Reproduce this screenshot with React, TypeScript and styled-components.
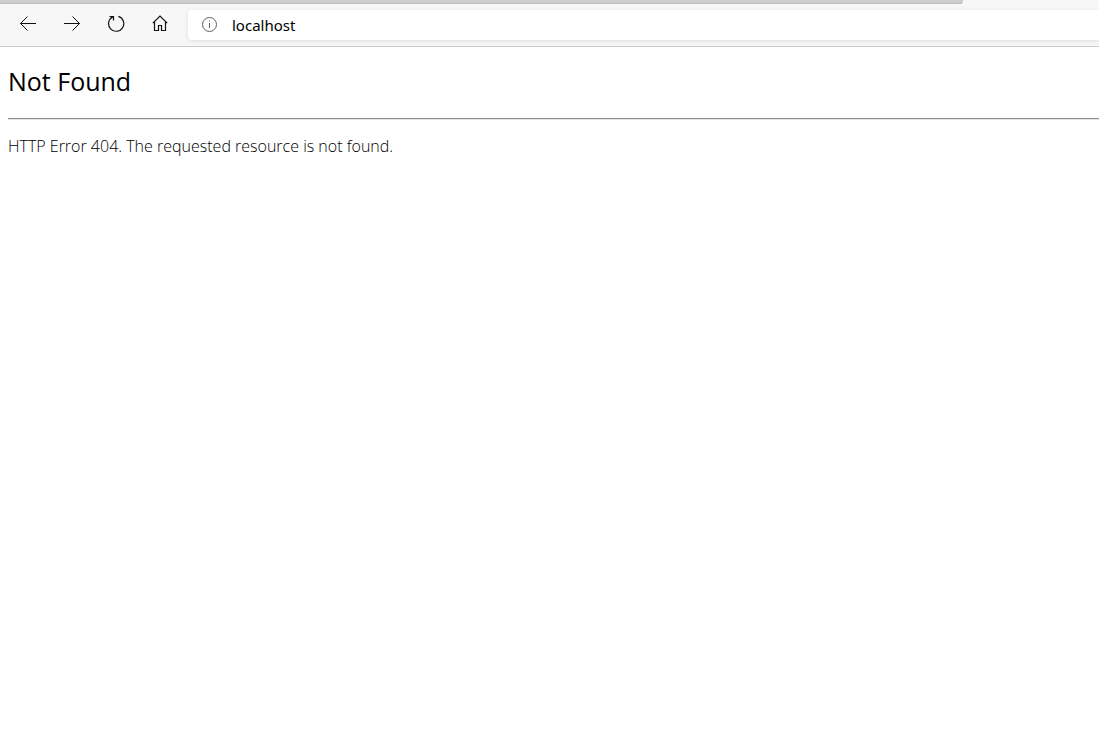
import React from "react";
import styled, { createGlobalStyle } from "styled-components";

const GlobalStyle = createGlobalStyle`
  * { box-sizing: border-box; }
  body {
    margin: 0;
    background: #fff;
    color: #000;
    font-family: "Open Sans", "Noto Sans", sans-serif;
  }
`;

const Chrome = styled.header`
  background: #f7f7f7;
  border-bottom: 1px solid #cccccc;
`;

const TabStrip = styled.div`
  height: 4px;
  padding-right: 136px;
`;

const TabStripFill = styled.div`
  height: 4px;
  background: #cdcdcd;
  border-bottom: 1px solid #bcbcbc;
  border-bottom-right-radius: 3px;
`;

const Toolbar = styled.nav`
  display: flex;
  align-items: center;
  height: 42px;
  padding: 0 0 0 6px;
`;

const ToolButton = styled.button`
  display: flex;
  align-items: center;
  justify-content: center;
  flex: none;
  width: 44px;
  height: 40px;
  margin-bottom: 2px;
  padding: 0;
  border: 0;
  background: transparent;
`;

const AddressBar = styled.label`
  display: flex;
  align-items: center;
  flex: 1;
  min-width: 0;
  height: 30px;
  margin-left: 6px;
  padding-left: 13px;
  gap: 14px;
  background: #fff;
  border-radius: 4px 0 0 4px;
  box-shadow: 0 1px 4px rgba(0, 0, 0, 0.1);
`;

const AddressInput = styled.input`
  flex: 1;
  min-width: 0;
  height: 28px;
  padding: 0;
  border: 0;
  outline: 0;
  background: transparent;
  color: #000;
  font: 400 15px "Noto Sans", "Open Sans", sans-serif;
`;

const Icon = styled.svg`
  display: block;
  flex: none;
  fill: none;
  stroke: #111;
`;

const Page = styled.main`
  padding-left: 8px;
`;

const Title = styled.h1`
  margin: 0;
  padding: 17px 0 20px;
  font-size: 25px;
  line-height: 34px;
  font-weight: 400;
`;

const Rule = styled.hr`
  height: 2px;
  margin: 0;
  border: 0;
  border-top: 1px solid #8f8f8f;
  border-bottom: 1px solid #e4e4e4;
`;

const Message = styled.p`
  margin: 0;
  padding-top: 14px;
  font-size: 16px;
  line-height: 24px;
  font-weight: 300;
`;

export default function App() {
  return (
    <>
      <GlobalStyle />
      <Chrome>
        <TabStrip>
          <TabStripFill />
        </TabStrip>
        <Toolbar aria-label="Browser">
          <ToolButton type="button" aria-label="Back">
            <Icon width="18" height="18" viewBox="0 0 18 18">
              <path d="M1.5 8.5H17M8.5 1.5L1.5 8.5L8.5 15.5" />
            </Icon>
          </ToolButton>
          <ToolButton type="button" aria-label="Forward">
            <Icon width="18" height="18" viewBox="0 0 18 18">
              <path d="M1 8.5H16.5M9.5 1.5L16.5 8.5L9.5 15.5" />
            </Icon>
          </ToolButton>
          <ToolButton type="button" aria-label="Refresh">
            <Icon width="18" height="18" viewBox="0 0 18 18">
              <path d="M11.4 1.4A7.6 7.6 0 1 1 5.7 1.9M2.5 1.5H6.5V5.5" strokeWidth="1.2" />
            </Icon>
          </ToolButton>
          <ToolButton type="button" aria-label="Home">
            <Icon width="18" height="18" viewBox="0 0 18 18">
              <path d="M1.8 8.2L9 1L16.2 8.2M3.5 6.8V15.5H7.5V10.5H10.5V15.5H14.5V6.8" strokeWidth="1.2" />
            </Icon>
          </ToolButton>
          <AddressBar>
            <Icon width="17" height="18" viewBox="0 0 17 18" aria-hidden="true">
              <circle cx="8.5" cy="8.5" r="7" stroke="#606060" />
              <path d="M8.5 7V12M8.5 4.5V5.5" stroke="#606060" />
            </Icon>
            <AddressInput type="text" aria-label="Address" defaultValue="localhost" />
          </AddressBar>
        </Toolbar>
      </Chrome>
      <Page>
        <Title>Not Found</Title>
        <Rule />
        <Message>HTTP Error 404. The requested resource is not found.</Message>
      </Page>
    </>
  );
}
